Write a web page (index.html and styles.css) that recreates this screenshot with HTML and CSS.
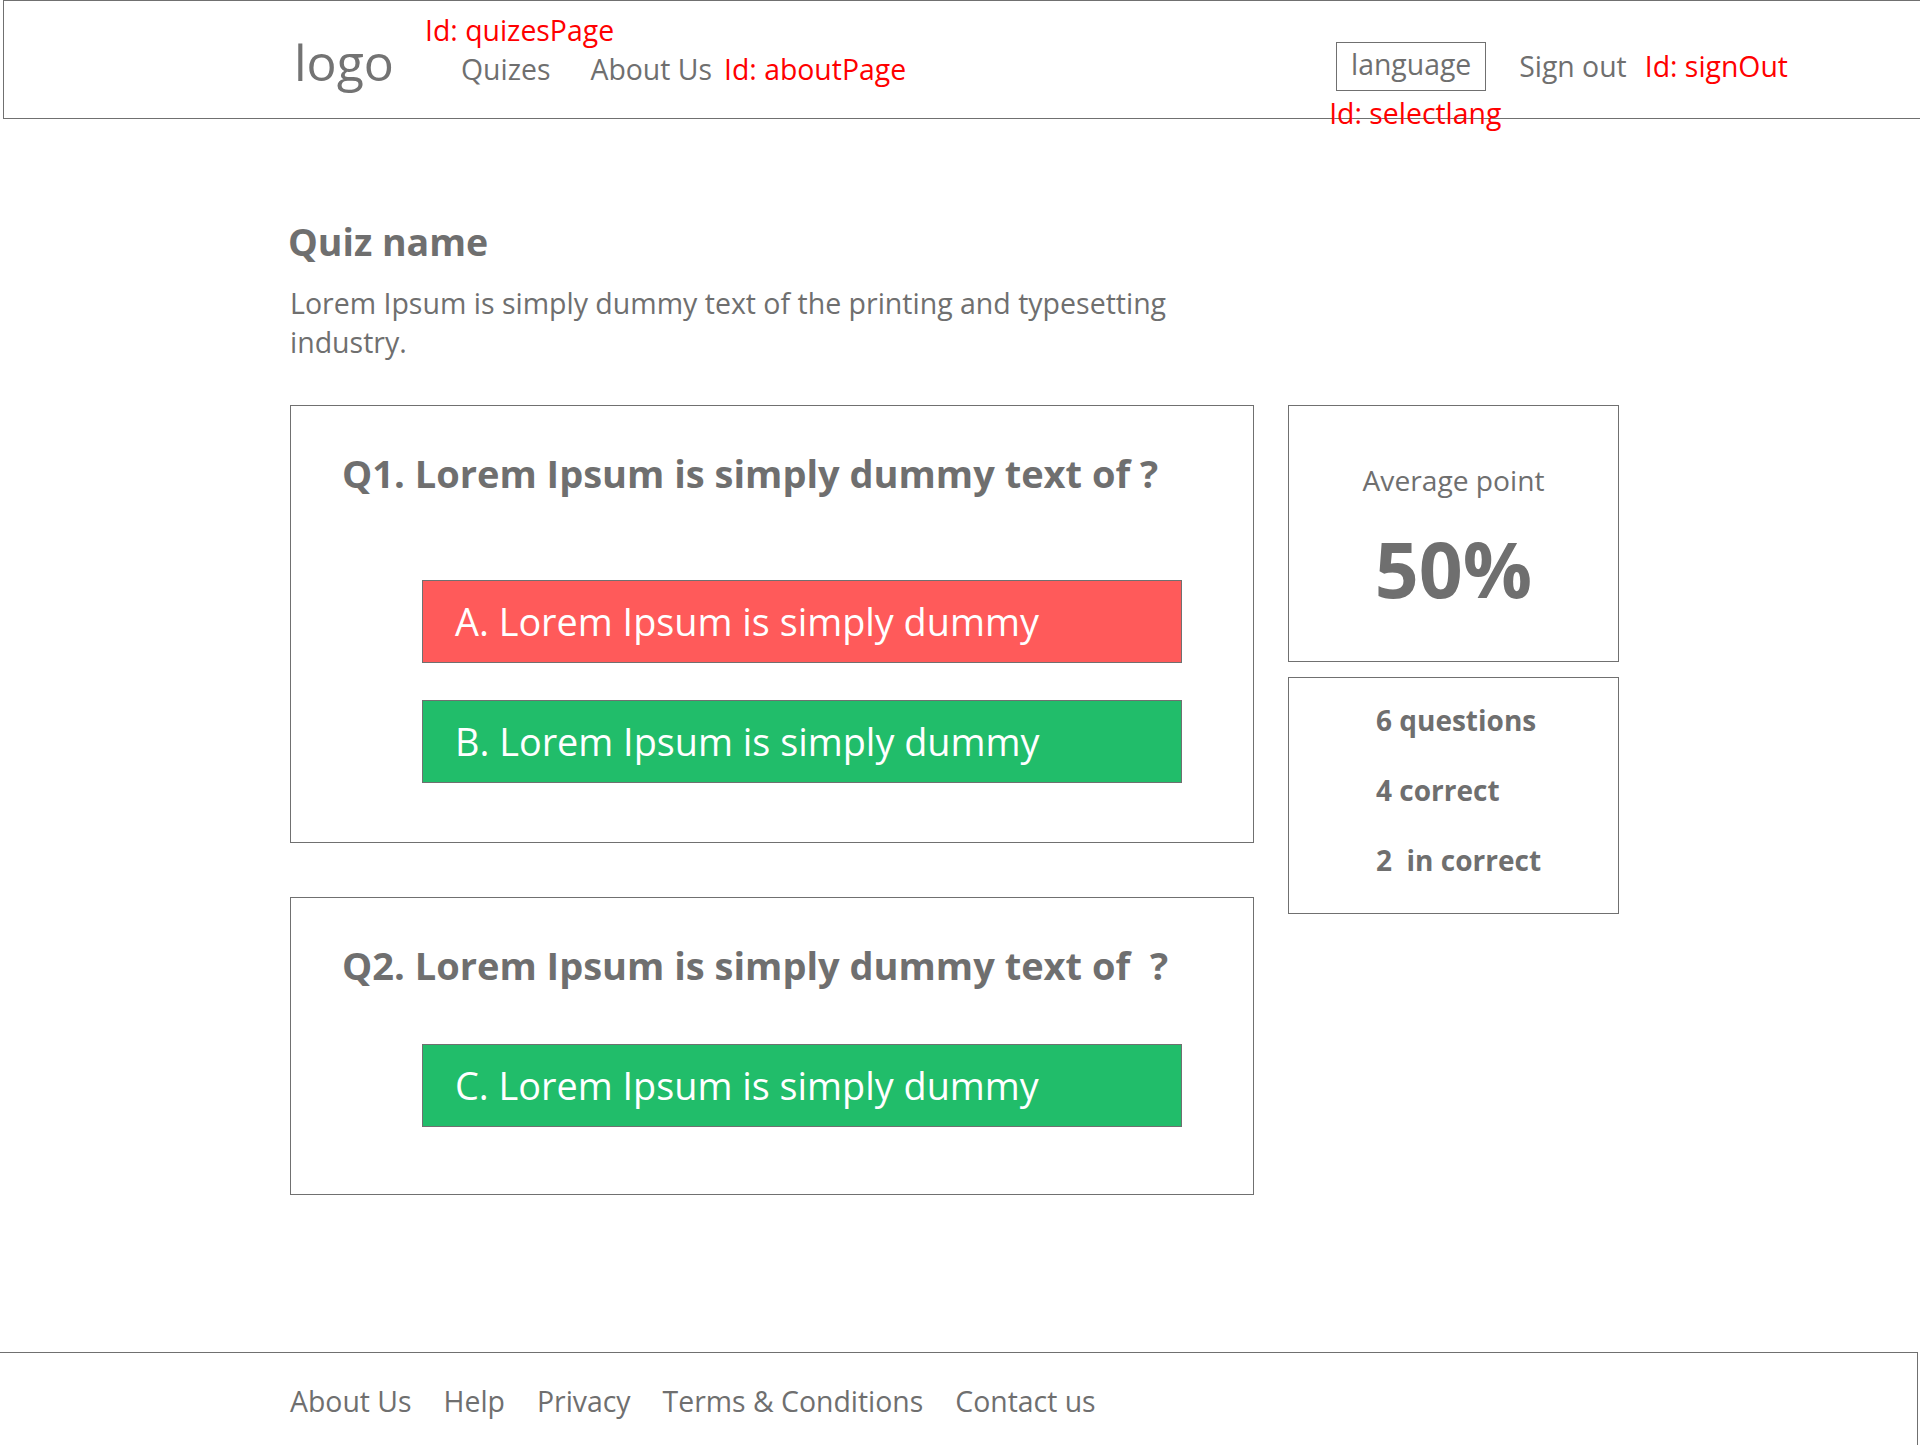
FILE: index.html
```html
<!DOCTYPE html>
<html lang="en">
<head>
<meta charset="utf-8">
<title>Quiz result</title>
<link rel="stylesheet" href="styles.css">
</head>
<body>
<div class="page">
  <header class="site-header">
    <div class="logo">logo</div>
    <nav class="main-nav">
      <a class="nav-link nav-link--quizes" href="#">Quizes<span class="id-note id-note--quizes">Id: quizesPage</span></a>
      <a class="nav-link nav-link--about" href="#">About Us</a>
      <span class="id-label">Id: aboutPage</span>
    </nav>
    <div class="user-nav">
      <div class="lang-select">language<span class="id-note id-note--lang">Id: selectlang</span></div>
      <a class="nav-link nav-link--signout" href="#">Sign out</a>
      <span class="id-label id-label--signout">Id: signOut</span>
    </div>
  </header>

  <main class="main">
    <h1 class="quiz-title">Quiz name</h1>
    <p class="quiz-desc">Lorem Ipsum is simply dummy text of the printing and typesetting industry.</p>

    <div class="content">
      <div class="questions">
        <section class="q-card">
          <h2 class="q-title">Q1. Lorem Ipsum is simply dummy text of ?</h2>
          <div class="answers">
            <div class="answer answer--wrong">A. Lorem Ipsum is simply dummy</div>
            <div class="answer answer--right">B. Lorem Ipsum is simply dummy</div>
          </div>
        </section>
        <section class="q-card q-card--single">
          <h2 class="q-title">Q2. Lorem Ipsum is simply dummy text of &nbsp;?</h2>
          <div class="answers">
            <div class="answer answer--right">C. Lorem Ipsum is simply dummy</div>
          </div>
        </section>
      </div>

      <aside class="side">
        <div class="avg-box">
          <div class="avg-label">Average point</div>
          <div class="avg-value">50%</div>
        </div>
        <div class="stats-box">
          <div class="stat">6 questions</div>
          <div class="stat">4 correct</div>
          <div class="stat">2 &nbsp;in correct</div>
        </div>
      </aside>
    </div>
  </main>

  <footer class="site-footer">
    <a class="footer-link" href="#">About Us</a>
    <a class="footer-link" href="#">Help</a>
    <a class="footer-link" href="#">Privacy</a>
    <a class="footer-link" href="#">Terms &amp; Conditions</a>
    <a class="footer-link" href="#">Contact us</a>
  </footer>
</div>
</body>
</html>
```

FILE: styles.css
```css
* {
  box-sizing: border-box;
}

html, body {
  margin: 0;
  padding: 0;
}

body {
  width: 1920px;
  height: 1445px;
  overflow: hidden;
  background: #ffffff;
  color: #6f6f6f;
  font-family: "Open Sans", "Noto Sans", sans-serif;
}

a {
  color: inherit;
  text-decoration: none;
}

.page {
  height: 1445px;
  display: flex;
  flex-direction: column;
}

/* ---------- header ---------- */
.site-header {
  margin-left: 3px;
  height: 119px;
  border: 1px solid #707070;
  border-right: none;
  display: flex;
  align-items: flex-start;
  padding: 0 132px 0 290px;
}

.logo {
  font-size: 50px;
  line-height: 48px;
  margin-top: 37px;
  width: 167px;
  color: #737373;
}

.main-nav {
  display: flex;
  align-items: flex-start;
  margin-top: 51px;
}

.nav-link,
.id-label {
  font-size: 28.4px;
  line-height: 34px;
  white-space: nowrap;
}

.nav-link--quizes {
  position: relative;
  margin-right: 40px;
}

.nav-link--about {
  margin-right: 12px;
}

.id-label {
  color: #ff0000;
}

.id-note {
  position: absolute;
  font-size: 28.4px;
  line-height: 34px;
  color: #ff0000;
  white-space: nowrap;
}

.id-note--quizes {
  left: -36px;
  top: -39px;
}

.user-nav {
  margin-left: auto;
  display: flex;
  align-items: flex-start;
}

.lang-select {
  position: relative;
  margin-top: 41px;
  width: 150px;
  height: 49px;
  border: 1px solid #707070;
  font-size: 28.4px;
  line-height: 42px;
  text-align: center;
  padding-bottom: 5px;
}

.id-note--lang {
  left: -8px;
  top: 53px;
}

.nav-link--signout {
  margin-top: 48px;
  margin-left: 33px;
  margin-right: 18px;
}

.id-label--signout {
  margin-top: 48px;
}

/* ---------- main ---------- */
.main {
  flex: 1;
  padding: 101px 0 0 290px;
}

.quiz-title {
  margin: 0;
  font-size: 37.5px;
  line-height: 44px;
  font-weight: 700;
  margin-left: -2px;
}

.quiz-desc {
  margin: 20px 0 0;
  max-width: 910px;
  font-size: 28.5px;
  line-height: 39px;
}

.content {
  display: flex;
  align-items: flex-start;
  gap: 34px;
  margin-top: 43px;
}

.questions {
  width: 964px;
  display: flex;
  flex-direction: column;
  gap: 54px;
}

.q-card {
  border: 1px solid #707070;
  padding: 46px 0 59px;
}

.q-card--single {
  padding-bottom: 67px;
}

.q-title {
  margin: 0 0 0 51px;
  font-size: 38px;
  line-height: 43px;
  font-weight: 700;
  white-space: nowrap;
}

.answers {
  margin: 85px 0 0 131px;
  width: 760px;
  display: flex;
  flex-direction: column;
  gap: 37px;
}

.q-card--single .answers {
  margin-top: 57px;
}

.answer {
  height: 83px;
  border: 1px solid #707070;
  display: flex;
  align-items: center;
  padding-left: 32px;
  color: #ffffff;
  font-size: 37.8px;
  white-space: nowrap;
}

.answer--wrong {
  background: #ff5a5a;
}

.answer--right {
  background: #21bd6a;
}

/* ---------- side column ---------- */
.side {
  width: 331px;
  display: flex;
  flex-direction: column;
  gap: 15px;
}

.avg-box {
  height: 257px;
  border: 1px solid #707070;
  padding-top: 56px;
  text-align: center;
}

.avg-label {
  font-size: 28.2px;
  line-height: 36px;
}

.avg-value {
  margin-top: 33px;
  font-size: 77px;
  line-height: 76px;
  font-weight: 700;
}

.stats-box {
  height: 237px;
  border: 1px solid #707070;
  padding: 7px 0 0 87px;
}

.stat {
  font-size: 28px;
  line-height: 70px;
  font-weight: 700;
  white-space: nowrap;
}

/* ---------- footer ---------- */
.site-footer {
  width: 1918px;
  height: 93px;
  flex: none;
  border-top: 1px solid #707070;
  border-right: 1px solid #707070;
  display: flex;
  align-items: flex-start;
  gap: 32px;
  padding: 31px 0 0 290px;
}

.footer-link {
  font-size: 28.4px;
  line-height: 34px;
  white-space: nowrap;
}
```
